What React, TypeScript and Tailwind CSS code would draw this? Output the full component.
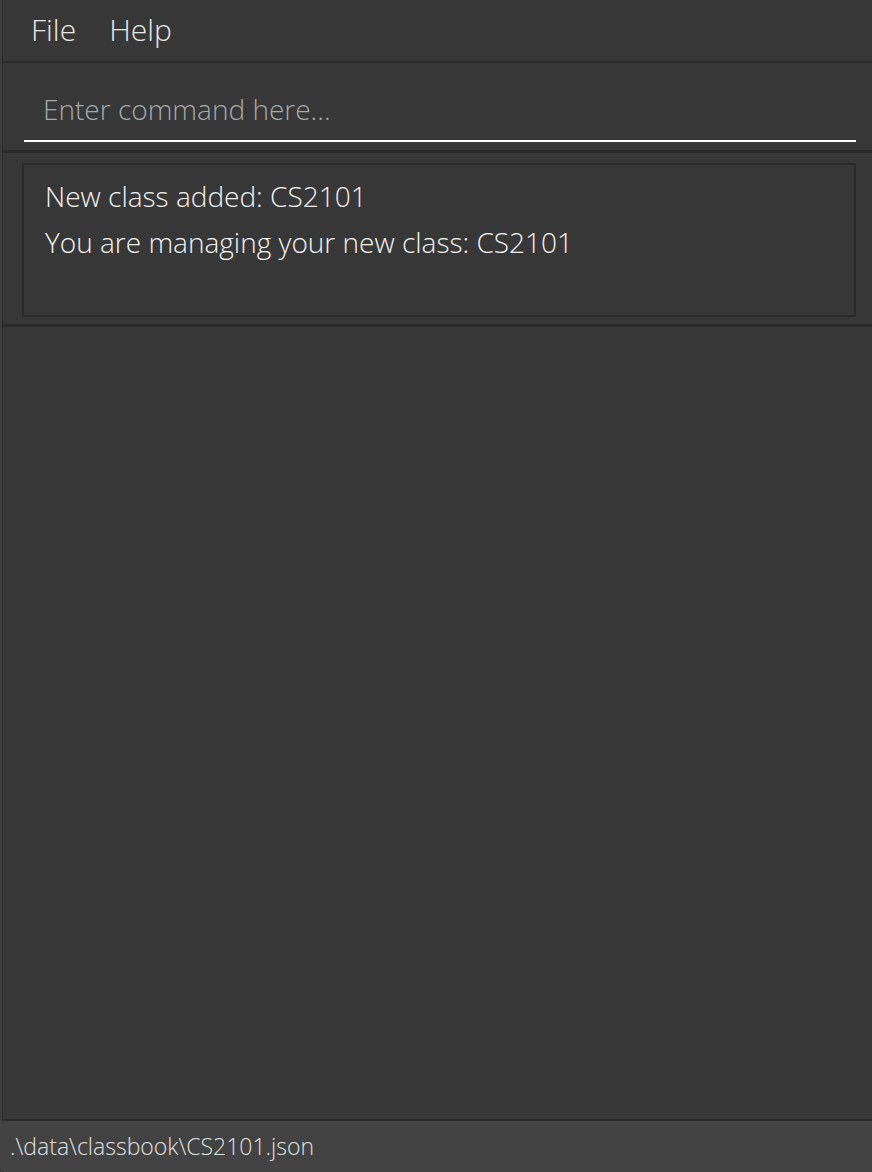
import React from 'react';

export default function App() {
    const font = { fontFamily: '"Open Sans", "Noto Sans", sans-serif' };

    return (
        <div className="w-[872px] h-[1172px] bg-[#383838] flex overflow-hidden" style={font}>
            <div className="w-[3px] bg-[#3d3d3d] border-r border-[#2a2a2a] shrink-0" />
            <div className="flex-1 flex flex-col">
                {/* menu bar */}
                <div className="h-[63px] flex items-center gap-[33px] pl-[28px] pb-[2px] border-b-2 border-[#2b2b2b] shrink-0">
                    <span className="text-[30px] font-light text-[#e8e8e8]">File</span>
                    <span className="text-[30px] font-light text-[#e8e8e8]">Help</span>
                </div>

                {/* command box */}
                <div className="h-[90px] pt-[14px] pl-[21px] pr-[16px] border-b-[3px] border-[#2b2b2b] shrink-0">
                    <input
                        type="text"
                        placeholder="Enter command here..."
                        className="w-full h-[65px] bg-transparent border-b-2 border-white outline-none px-[19px] text-[28px] font-light text-white placeholder:text-[#a3a9ad]"
                    />
                </div>

                {/* result display */}
                <div className="h-[174px] pl-[19px] pr-[16px] pt-[10px] pb-[7px] border-b-[3px] border-[#2b2b2b] shrink-0">
                    <div className="h-full border-2 border-[#2b2b2b] px-[21px] pt-[11px] flex flex-col gap-[6px]">
                        <p className="text-[28px] font-light text-[#f2f2f2] leading-[40px]">New class added: CS2101</p>
                        <p className="text-[28px] font-light text-[#f2f2f2] leading-[40px]">You are managing your new class: CS2101</p>
                    </div>
                </div>

                {/* list panel (empty) */}
                <div className="flex-1 border-b-2 border-[#2b2b2b]" />

                {/* status bar */}
                <div className="h-[51px] bg-[#434343] flex items-center -ml-[3px] pl-[10px] rounded-bl-[6px] shrink-0">
                    <span className="text-[23px] font-light text-[#e0e0e0]">.\data\classbook\CS2101.json</span>
                </div>
            </div>
        </div>
    );
}
